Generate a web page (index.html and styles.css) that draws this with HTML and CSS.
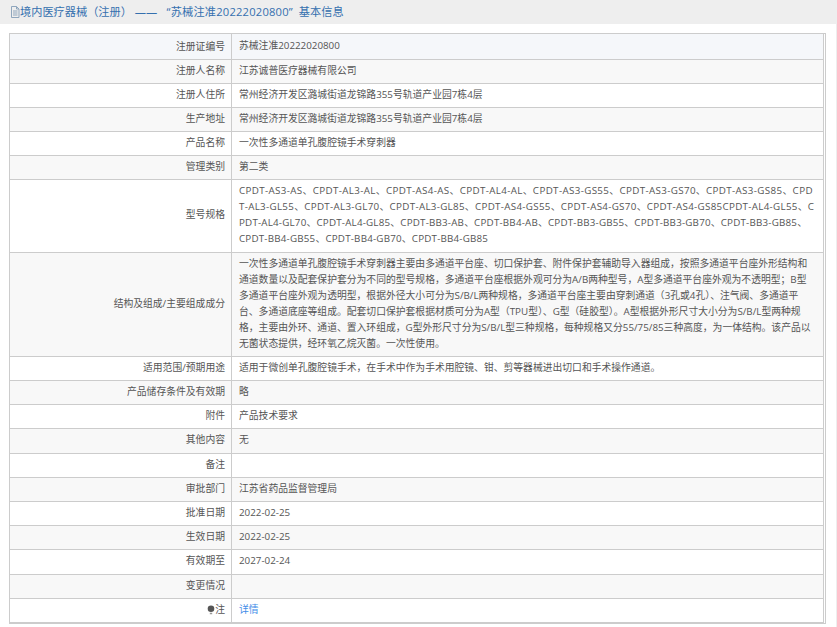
FILE: index.html
```html
<!DOCTYPE html>
<html lang="zh">
<head>
<meta charset="utf-8">
<title>基本信息</title>
<link rel="stylesheet" href="styles.css">
</head>
<body>
<div class="title">
<svg class="doc" viewBox="0 0 10 12" width="10" height="12"><path d="M1.5.5h5l2.500 2.500v8.500h-7.500zM6.500.5v2.500h2.500M3 5h4.500M3 7h4.500M3 9h4.500" fill="none" stroke="#8fa6bd" stroke-width="1"/></svg><span>境内医疗器械（注册） —— <span class="quote">“苏械注准20222020800”</span> 基本信息</span>
</div>
<div class="info">
<div class="row first"><div class="k">注册证编号</div><div class="v">苏械注准20222020800</div></div>
<div class="row odd"><div class="k">注册人名称</div><div class="v">江苏诚普医疗器械有限公司</div></div>
<div class="row"><div class="k">注册人住所</div><div class="v">常州经济开发区潞城街道龙锦路355号轨道产业园7栋4层</div></div>
<div class="row odd"><div class="k">生产地址</div><div class="v">常州经济开发区潞城街道龙锦路355号轨道产业园7栋4层</div></div>
<div class="row"><div class="k">产品名称</div><div class="v">一次性多通道单孔腹腔镜手术穿刺器</div></div>
<div class="row odd"><div class="k">管理类别</div><div class="v">第二类</div></div>
<div class="row"><div class="k">型号规格</div><div class="v"><span class="code code-a">CPDT-AS3-AS、CPDT-AL3-AL、CPDT-AS4-AS、CPDT-AL4-AL、CPDT-AS3-GS55、CPDT-AS3-GS70、CPDT-AS3-GS85、CPD</span><span class="code code-b">T-AL3-GL55、CPDT-AL3-GL70、CPDT-AL3-GL85、CPDT-AS4-GS55、CPDT-AS4-GS70、CPDT-AS4-GS85CPDT-AL4-GL55、C</span><span class="code code-c">PDT-AL4-GL70、CPDT-AL4-GL85、CPDT-BB3-AB、CPDT-BB4-AB、CPDT-BB3-GB55、CPDT-BB3-GB70、CPDT-BB3-GB85、</span><span class="code code-c">CPDT-BB4-GB55、CPDT-BB4-GB70、CPDT-BB4-GB85</span></div></div>
<div class="row odd"><div class="k">结构及组成/主要组成成分</div><div class="v">一次性多通道单孔腹腔镜手术穿刺器主要由多通道平台座、切口保护套、附件保护套辅助导入器组成，按照多通道平台座外形结构和通道数量以及配套保护套分为不同的型号规格，多通道平台座根据外观可分为A/B两种型号，A型多通道平台座外观为不透明型；B型多通道平台座外观为透明型，根据外径大小可分为S/B/L两种规格，多通道平台座主要由穿刺通道（3孔或4孔）、注气阀、多通道平台、多通道底座等组成。配套切口保护套根据材质可分为A型（TPU型）、G型（硅胶型）。A型根据外形尺寸大小分为S/B/L型两种规格，主要由外环、通道、置入环组成，G型外形尺寸分为S/B/L型三种规格，每种规格又分55/75/85三种高度，为一体结构。该产品以无菌状态提供，经环氧乙烷灭菌。一次性使用。</div></div>
<div class="row"><div class="k">适用范围/预期用途</div><div class="v">适用于微创单孔腹腔镜手术，在手术中作为手术用腔镜、钳、剪等器械进出切口和手术操作通道。</div></div>
<div class="row odd"><div class="k">产品储存条件及有效期</div><div class="v">略</div></div>
<div class="row"><div class="k">附件</div><div class="v">产品技术要求</div></div>
<div class="row odd"><div class="k">其他内容</div><div class="v">无</div></div>
<div class="row"><div class="k">备注</div><div class="v"></div></div>
<div class="row odd"><div class="k">审批部门</div><div class="v">江苏省药品监督管理局</div></div>
<div class="row"><div class="k">批准日期</div><div class="v">2022-02-25</div></div>
<div class="row odd"><div class="k">生效日期</div><div class="v">2022-02-25</div></div>
<div class="row"><div class="k">有效期至</div><div class="v">2027-02-24</div></div>
<div class="row odd"><div class="k">变更情况</div><div class="v"></div></div>
<div class="row"><div class="k"><svg class="bulb" viewBox="0 0 8 10" width="8" height="10"><circle cx="4" cy="3.800" r="3.300" fill="#555"/><path d="M2.800 8.500h2.400" stroke="#999" stroke-width="1.500"/></svg>注</div><div class="v"><a class="more" href="#">详情</a></div></div>
</div>
</body>
</html>
```
FILE: styles.css
```css
* { box-sizing: border-box; }
html, body { margin: 0; padding: 0; background: #fff; }
body {
  min-height: 100vh;
  border-right: 1px solid #eee;
  font-family: "Open Sans", "Noto Sans CJK SC", sans-serif;
  font-size: 9.8px;
  line-height: 16px;
  color: #555;
}
.title {
  display: flex;
  align-items: center;
  height: 24px;
  padding-left: 10px;
  background: #eee;
  color: #3570ae;
  font-size: 11.2px;
}
.doc { flex: none; }
.quote { margin: 0 3px 0 6.5px; letter-spacing: .2px; }
.info {
  width: 817px;
  margin: 9px 0 0 9px;
  border: 1px solid #ccc;
  border-right: 3px double #ccc;
  border-bottom-width: 2px;
}
.row {
  display: flex;
  min-height: 24.2px;
  border-top: 1px solid #ccc;
}
.row:first-child { border-top: 0; min-height: 24.5px; }
.k {
  flex: none;
  width: 222px;
  display: flex;
  align-items: center;
  justify-content: flex-end;
  padding: 3px 6px 4.2px;
  border-right: 1px solid #ccc;
}
.v {
  flex: 1;
  min-width: 0;
  padding: 3px 7px 4.2px;
  word-break: break-all;
}
.first .k, .first .v { padding-top: 4px; padding-bottom: 3.2px; }
.first { background: #f5f7fa; }
.odd { background: #f8f8f8; }
.code { display: block; white-space: nowrap; }
.code-a { letter-spacing: .36px; }
.code-b { letter-spacing: .31px; }
.code-c { letter-spacing: .2px; }
.more { color: #3f8de8; text-decoration: none; }
.bulb { flex: none; }
```
